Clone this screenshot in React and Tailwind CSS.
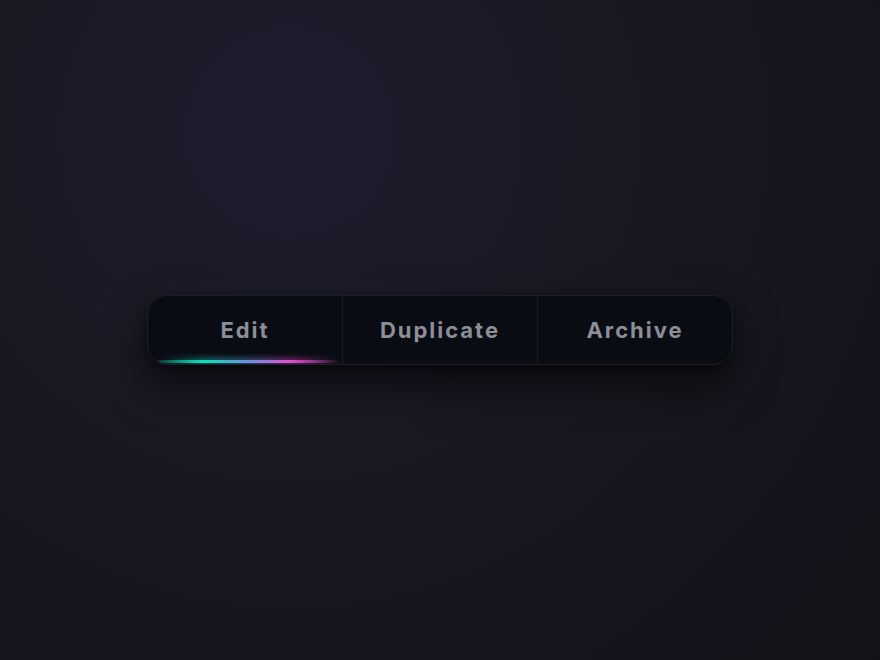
import React from 'react';

const tabs = ['Edit', 'Duplicate', 'Archive'];

export default function App() {
  return (
    <div className="w-[880px] h-[660px] bg-[radial-gradient(circle_at_33%_20%,#1e1d2f_0%,#18171f_55%,#121219_100%)] flex items-center justify-center font-['Inter','Liberation_Sans',sans-serif]">
      {/* segmented bar */}
      <div className="flex w-[586px] h-[70px] rounded-[20px] bg-[#0a0c13] border border-[#1e2029] shadow-[0_20px_44px_rgba(0,0,0,0.6),0_4px_10px_rgba(0,0,0,0.4)] overflow-hidden">
        {tabs.map((t, i) => (
          <div
            key={t}
            className={`relative flex-1 flex items-center justify-center ${i > 0 ? 'border-l border-[#1b1d26]' : ''}`}
          >
            <span className="text-[22px] font-bold tracking-[0.09em] text-[#8c8e98]">{t}</span>
            {i === 0 && (
              <>
                <div className="absolute left-[10px] right-[2px] bottom-[0px] h-[5px] blur-[3px] bg-[linear-gradient(90deg,transparent_0%,#12d6b4_25%,#6c8fe0_52%,#e048cf_72%,transparent_100%)] opacity-70" />
                <div className="absolute left-[10px] right-[2px] bottom-[1px] h-[3px] rounded-full bg-[linear-gradient(90deg,rgba(18,214,180,0.2)_0%,#16dcb8_25%,#6c8fe0_50%,#e24ed2_72%,rgba(200,60,180,0)_100%)]" />
              </>
            )}
          </div>
        ))}
      </div>
    </div>
  );
}
